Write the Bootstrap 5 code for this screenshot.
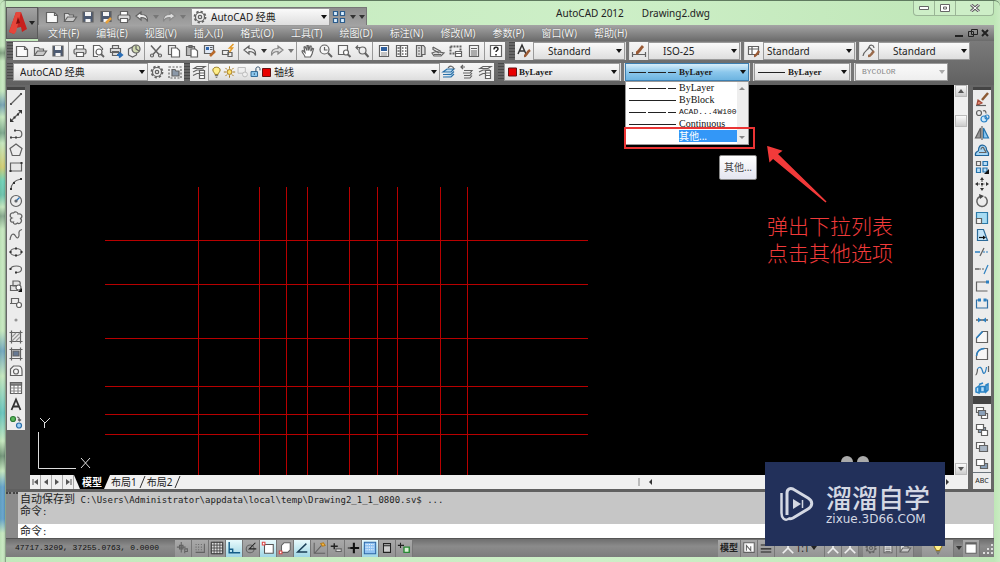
<!DOCTYPE html>
<html lang="zh-CN">
<head>
<meta charset="utf-8">
<meta name="viewport" content="width=device-width, initial-scale=1">
<title>AutoCAD 2012 - Drawing2.dwg</title>
<link href="https://cdn.jsdelivr.net/npm/bootstrap@5.3.0/dist/css/bootstrap.min.css" rel="stylesheet">
<style>
:root{--ui:"Noto Sans","Noto Sans CJK SC",sans-serif;--chrome:#676767;--strip:#ececec}
body{font-family:var(--ui);font-size:10px;line-height:16px;color:#222;background:#bfe0b8}
button,select,input{font-family:inherit;font-size:inherit;line-height:inherit;color:inherit}
svg{display:block;flex:none}
.ic{width:16px;height:16px;fill:none;stroke:#626262;stroke-width:1.2;overflow:hidden}
.win{height:100vh;padding:0 6px 5px;border:1px solid #5f7a5f;border-width:1px 0 0;border-radius:6px 6px 0 0;
 background:linear-gradient(90deg,#b3d8ac 0,#d0ebca 3px,#7d947c 6px,#c3e9bc 6px,#cdefc7 60%,#bfe6b7 994px,#c9ecc2)}
.edge-l{position:absolute;left:0;top:0;bottom:0;width:5px;opacity:.55;background:linear-gradient(#c5e8be 45px,#4d6b52 52px,#c5e8be 60px,#c5e8be 90px,#3a6ea8 104px,#c5e8be 116px,#476 132px,#c5e8be 142px,#d9b83a 166px,#2fc0b0 180px,#2ba79d 194px,#c5e8be 206px,#576 215px,#c5e8be 228px,#c5e8be 330px,#37b 350px,#c5e8be 375px,#2ab 412px,#c5e8be 440px,#354 455px,#c5e8be 470px,#1b6fd0 486px,#1b6fd0 518px,#c5e8be 532px)}
.appbtn{width:32px;height:32px;margin-top:6px;background:linear-gradient(#a3a3a3,#8a8a8a 50%,#6f6f6f);border:1px solid #5a5a5a}
.titlerow{height:24px}
.qat{height:18px;margin-top:6px;background:linear-gradient(#8d8d8d,#a2a2a2);border:1px solid #777;border-bottom:0}
.tl{width:18px;height:18px;padding:0;border:0;background:none;display:flex;align-items:center;justify-content:center;flex:none}
.crt{width:9px;height:18px;padding:0;border:0;background:none;flex:none;display:flex;align-items:center;justify-content:center}
.crt::before{content:"";border:3px solid transparent;border-top:4px solid #333;border-bottom:0}
.crt.dim::before{border-top-color:#777}
.menus{height:16px;background:linear-gradient(#a5a5a5,#6b6b6b);padding-left:10px;padding-right:4px}
.menus a{color:#f5f5f5;text-decoration:none;white-space:nowrap;text-shadow:0 0 1px #444}
.menus ul{gap:17px}
.wctl{height:15px;border:1px solid #9ab596;border-top:0;border-radius:0 0 4px 4px;background:#cdeec7}
.wctl button{height:14px;padding:0;border:0;border-right:1px solid #9ab596;background:none;width:21px;display:flex;align-items:center;justify-content:center}
.wctl button:last-child{border-right:0;width:37px}
.bars{background:linear-gradient(#7a7a7a,#616161);padding:1px 1px 4px}
.barrow{height:18px}
.barrow+.barrow{margin-top:3px}
.grip{width:6px;height:18px;background:repeating-linear-gradient(#4a4a4a 0 1px,#666 1px 3px);flex:none}
.grip-s{width:5px;height:18px;flex:none;border-left:1px solid #ddd;border-right:1px solid #ddd;background:#777}
.strip{background:linear-gradient(#f6f6f6,#e4e4e4)}
.sepv{width:4px;height:18px;flex:none;background:linear-gradient(90deg,transparent 1px,#999 1px 2px,transparent 2px)}
.cmb{position:relative;height:18px;flex:none}
.cmb .form-select{height:18px;min-height:0;padding:0 12px 0 6px;font-size:10px;line-height:16px;border:1px solid #9a9a9a;border-radius:0;color:#222;
 background-color:#eee;background-image:url("data:image/svg+xml,%3Csvg xmlns='http://www.w3.org/2000/svg' viewBox='0 0 8 6'%3E%3Cpath d='M1 1h6L4 5z' fill='%23111'/%3E%3C/svg%3E"),linear-gradient(#fafafa,#dedede);background-size:8px 6px,100% 100%;background-position:right 1px center,0 0;background-repeat:no-repeat}
.cmb .form-select.hot{background-color:#9dd0ee;background-image:url("data:image/svg+xml,%3Csvg xmlns='http://www.w3.org/2000/svg' viewBox='0 0 8 6'%3E%3Cpath d='M1 1h6L4 5z' fill='%23111'/%3E%3C/svg%3E"),linear-gradient(#d8eefa,#8cc8ec 50%,#6db4e0);border-color:#3c7fb1}
.cmb .form-select:disabled{color:#888;background-color:#f2f2f2;background-image:url("data:image/svg+xml,%3Csvg xmlns='http://www.w3.org/2000/svg' viewBox='0 0 8 6'%3E%3Cpath d='M1 1h6L4 5z' fill='%23aaa'/%3E%3C/svg%3E"),linear-gradient(#fafafa,#eee)}
.cmb .deco{position:absolute;left:4px;top:1px;pointer-events:none}
.ser{font-family:"Liberation Serif",serif;font-weight:700}
.cmb .form-select.ser{font-size:9px}
.mono8{font-family:"Liberation Mono",monospace;font-size:8px}
.cmb .form-select.mono8{font-size:8px}
.pl-swatch{padding-left:14px!important}.pl-line{padding-left:53px!important}.pl-wide{padding-left:14px!important}.pl-short{padding-left:33px!important}.pl-gear{padding-left:19px!important}.pl-layer{padding-left:65px!important}
.ltlist{position:absolute;z-index:20;left:0;top:18px;width:124px;height:64px;background:#fff;border:1px solid #999;overflow:hidden}
.ltlist ul{width:111px;overflow:hidden;flex:none}
.ltlist li{height:12px;line-height:12px;font-weight:400;color:#111;font-size:10px;padding-left:3px;white-space:nowrap}
.ltlist li svg{width:50px;height:12px}
.ltlist li.mono8{font-size:8px}
.ltlist .sel{background:#3397f7;color:#fff;font-family:var(--ui);flex:1}
.ltlist .vs{background:#eee;width:11px}
.hl{position:absolute;z-index:21;left:-1px;top:64px;width:131px;height:22px;border:2px solid #ea3434;pointer-events:none}
.tip{position:absolute;z-index:20;left:94px;top:92px;height:25px;padding:3px 4px;border:1px solid #888;border-radius:2px;background:linear-gradient(#fff,#e4e5f0);color:#444;white-space:nowrap}
.work{background:var(--chrome);min-height:0;padding-left:1px}
.side{width:18px;margin-top:2px;flex:none;overflow:hidden}
.side .tl{height:17px;background:var(--strip)}
.side .vgrip{height:3px;flex:none;background:#444}
.canvas{background:#000;overflow:hidden;min-width:0;min-height:0;position:relative}
.note{position:absolute;left:737px;top:127px;font-size:21px;line-height:27px;font-weight:300;color:#f03a3a;font-family:"Noto Sans CJK SC",sans-serif;white-space:nowrap}
.vscroll{width:14px;background:#f0f0f0;flex:none}
.sb{width:12px;height:12px;padding:0;border:1px solid #bbb;background:linear-gradient(#fafafa,#ccc);display:flex;align-items:center;justify-content:center;flex:none}
.tabs{height:14px;background:#f0f0f0;line-height:14px}
.tabs button{border:0;padding:0;background:#f0f0f0;width:11px;height:14px;display:flex;align-items:center;justify-content:center;border-right:1px solid #aaa}
.tabs a{text-decoration:none;color:#222}
.tabs .on{background:#000;color:#fff;font-weight:700}
.cmd{border-top:3px solid #606060;background:#c6c6c6;height:49px;font-family:"DejaVu Sans Mono","Noto Sans CJK SC",monospace;font-size:9px;line-height:12px}
.cmd .handle{width:12px;background:#8b8b8b;border-top:2px dotted #444;flex:none}
.cmd .zh{font-size:11px}
.cmd .hist{padding:2px 0 0 2px}
.cmd input{border:0;padding:0;background:#fff;width:100%;height:14px;line-height:14px;outline:0}
.cmdline{background:#fff;height:14px;line-height:15px;padding-left:2px}
.status{height:19px;background:linear-gradient(#6e6e6e,#8b8b8b 40%,#7c7c7c);border-top:1px solid #555}
.status .tl{width:17px;height:17px;background:linear-gradient(#a9a9a9,#939393);border-right:1px solid #777}
.status .tl.lit{background:linear-gradient(#e8fafc,#9fd6e4)}
.status .ic{width:14px;height:14px}
.coord{width:160px;flex:none;font-family:"Liberation Mono",monospace;font-size:8px;color:#111;white-space:nowrap}
.brand{position:absolute;z-index:30;right:55px;bottom:16px;width:180px;height:84px;background:#22305a;color:#d4d8e3;padding-left:14px}
.brand .bn{font-family:"Noto Sans CJK SC",sans-serif;font-size:26px;line-height:30px;font-weight:500}
.brand .bu{font-family:"DejaVu Sans",sans-serif;font-size:12px;line-height:14px}
</style>
</head>
<body class="overflow-hidden">
<svg width="0" height="0" class="position-absolute" aria-hidden="true"><defs>
<symbol id="new" viewBox="0 0 16 16"><path d="M2.500 3.500h8l3 3v7h-11z" fill="#fafafa"/><path d="M10.500 3.500v3h3"/></symbol>
<symbol id="open" viewBox="0 0 16 16"><path d="M2.500 12.500v-8h4l1 1.500h4v2" fill="#ddd"/><path d="M2.500 12.500l3-4.500h9l-3 4.500z" fill="#c9c9c9"/></symbol>
<symbol id="save" viewBox="0 0 16 16"><path d="M3 3h10v10H3z" fill="#4c5a72"/><path d="M5 3h6v4H5zM5.500 10h5v3h-5z" fill="#f4f4f4" stroke="none"/></symbol>
<symbol id="saveas" viewBox="0 0 16 16"><path d="M3 2.500h10v10H3z" fill="#4c5a72"/><path d="M5 3h6v4H5zM5.500 10h5v3h-5z" fill="#f4f4f4" stroke="none"/><path d="M8 14l5-5" stroke="#e5a03c" stroke-width="2.500"/></symbol>
<symbol id="print" viewBox="0 0 16 16"><path d="M4.500 6V2.500h7V6" fill="#fff"/><rect x="2" y="6" width="12" height="5" rx="1.500" fill="#d8d8d8"/><path d="M4.500 9.500h7v4h-7z" fill="#fff"/></symbol>
<symbol id="preview" viewBox="0 0 16 16"><path d="M8 13.500H3.500v-11h6l3 3V7" fill="#fff"/><circle cx="9" cy="9" r="3"/><path d="M11 11l3 3" stroke-width="1.800"/></symbol>
<symbol id="plot" viewBox="0 0 16 16"><path d="M4.500 5V2.500h6V5M2.500 5.500h10v4h-10zM4.500 8.500h6v4h-6z" fill="#ddd"/><path d="M9 12h4m-2-2.500l3 2.500-3 2.500" stroke="#2a6db5" stroke-width="2"/></symbol>
<symbol id="publish" viewBox="0 0 16 16"><path d="M2.500 6l4-2 4 2v6l-4 2-4-2z" fill="#eee"/><circle cx="10" cy="6" r="4" fill="#cfd9b0"/><path d="M10 2.500v3.500l3 2"/></symbol>
<symbol id="cut" viewBox="0 0 16 16"><path d="M3 2.500l8 9M13 2.500l-8 9" stroke-width="1.500"/><circle cx="4" cy="12.500" r="1.500"/><circle cx="12" cy="12.500" r="1.500"/></symbol>
<symbol id="copyc" viewBox="0 0 16 16"><path d="M2.500 2.500h7v9h-7z" fill="#eee"/><path d="M5.500 5h5.500l2.500 2.500v6.500h-8z" fill="#fff"/></symbol>
<symbol id="paste" viewBox="0 0 16 16"><path d="M2.500 3.500h8v9h-8z" fill="#bbb"/><path d="M5 2.500h3v2H5z" fill="#777"/><path d="M7 6h4.500l2 2v6H7z" fill="#fff"/></symbol>
<symbol id="match" viewBox="0 0 16 16"><path d="M2.500 2.500h9v8h-9z" fill="#dfe8f5"/><path d="M4 4h3v3H4z" fill="#2e67b0" stroke="none"/><path d="M8 4.500h2.500M8 6.500h2.500"/><path d="M8 13l5-5" stroke="#b96b2c" stroke-width="2.500"/></symbol>
<symbol id="bedit" viewBox="0 0 16 16"><path d="M2.500 7.500h6v4h-6zM8 9.500h4v4H8z" fill="#eee"/><path d="M13.500 1l-4 4h3l-3 4" stroke="#e39a27" stroke-width="1.500"/></symbol>
<symbol id="undo" viewBox="0 0 16 16"><path d="M2 7l5-4v2.500c5 0 7 2 6.500 7-1-3-3-4-6.500-4V11z" fill="#eee"/></symbol>
<symbol id="redo" viewBox="0 0 16 16"><path d="M14 7L9 3v2.500c-5 0-7 2-6.500 7 1-3 3-4 6.500-4V11z" fill="#ddd" stroke="#888"/></symbol>
<symbol id="pan" viewBox="0 0 16 16"><path d="M5 14c0-2-3-4-3-6l1-.5L5 9.500 4 4l1-.5L7 7.500V2.500h1.200l.5 5L10 3l1.200.3-.4 5 1.700-3 1 .5L12 11l-1.500 3z" fill="#fff"/></symbol>
<symbol id="zoomr" viewBox="0 0 16 16"><circle cx="6.500" cy="6.500" r="4.500" fill="#f6f6f6"/><path d="M10 10l4 4" stroke-width="2"/><path d="M6.500 4v3h3"/></symbol>
<symbol id="zoomw" viewBox="0 0 16 16"><path d="M2.500 2.500h9v9h-9z" fill="#f6f6f6"/><circle cx="10" cy="9.500" r="2.500" fill="#fff"/><path d="M12 11.500l2.500 2.500" stroke-width="2"/></symbol>
<symbol id="zoomp" viewBox="0 0 16 16"><path d="M6 4.500H2m2-2l-2 2 2 2"/><circle cx="8.500" cy="7.500" r="3.500"/><path d="M11 10l3.500 4" stroke-width="2"/></symbol>
<symbol id="props" viewBox="0 0 16 16"><path d="M3.500 2.500h9v11h-9z" fill="#fff"/><path d="M5 4h6v4H5z" fill="#2e5f9e" stroke="none"/><path d="M5 10h6M5 12h6" stroke="#888"/></symbol>
<symbol id="dc" viewBox="0 0 16 16"><path d="M2.500 2.500h11v11h-11z" fill="#fff"/><path d="M6.500 2.500v11M8 5h1.500M11 5h1.500M8 8h1.500M11 8h1.500M8 11h1.500M11 11h1.500M3.500 5h2M3.500 8h2M3.500 11h2" stroke-width="1.500"/></symbol>
<symbol id="pal" viewBox="0 0 16 16"><path d="M4.500 2.500h7l1.500 2v7H10v2H4.500z" fill="#ddd"/><path d="M9.500 2.500v11M6 5h2M6 8h2M6 11h2"/></symbol>
<symbol id="sheet" viewBox="0 0 16 16"><path d="M2 10l4-1.500 8 1.500-3 3H4z" fill="#ddd"/><path d="M3 4l8 4.500M3 4v2.500l6 3.500M4 11.500h7"/></symbol>
<symbol id="mark-up" viewBox="0 0 16 16"><path d="M2.500 3.500h10v4M2.500 3.500v7H7" stroke-dasharray="2 1" stroke-width="2"/><path d="M7.500 8.500h6v5h-6zM7.500 10.500h6" fill="#fff"/></symbol>
<symbol id="calc" viewBox="0 0 16 16"><path d="M3.500 2.500h9v11h-9z" fill="#f4f4f4"/><path d="M5 5.500h6M5 8h6M5 10h6M5 12h6" stroke-width="1"/></symbol>
<symbol id="help" viewBox="0 0 16 16"><path d="M2.500 2.500h11v11h-11z" fill="#fff"/><path d="M6 6.500c0-3 4-3 4-.5 0 1.500-2 1.500-2 3M8 11v1.500" stroke="#222" stroke-width="1.500"/></symbol>
<symbol id="gear" viewBox="0 0 16 16"><circle cx="8" cy="8" r="5.500" stroke-width="1.800" stroke-dasharray="2.300 2"/><circle cx="8" cy="8" r="4.500"/><circle cx="8" cy="8" r="1.700"/></symbol>
<symbol id="wssave" viewBox="0 0 16 16"><path d="M2 3h12v11H2z" stroke-dasharray="2 1.500"/><path d="M5 5.500h3l1 1.500h3v5H5z" fill="#8b98a8"/></symbol>
<symbol id="grid4" viewBox="0 0 16 16"><path d="M2.500 2.500h4v4h-4zM9.500 2.500h4v4h-4zM2.500 9.500h4v4h-4zM9.500 9.500h4v4h-4z" fill="#d9efff" stroke="#2c5d8d"/></symbol>
<symbol id="layers" viewBox="0 0 16 16"><path d="M3 4.500l3-2h8l-3 2zM2 8l4-2h7M2 11.500l4-2h2"/><path d="M8.500 6.500h5v8h-5zM8.500 9h5M8.500 11.500h5" fill="#fff"/></symbol>
<symbol id="laycur" viewBox="0 0 16 16"><path d="M2 8l4-3h7l-3 3zM2 10.500h8l3-3M2 13h8l3-3" stroke="#2a70a8" fill="#bddcf0"/><path d="M7 4c2-3 5-2 6 1"/></symbol>
<symbol id="layprev" viewBox="0 0 16 16"><path d="M5 6.500h8l-2 2.500H4M5 11.500h6l2-2.500M5 14h6l2-2.500M2 3h4M4 1L2 3l2 2"/></symbol>
<symbol id="bulb" viewBox="0 0 16 16"><path d="M6 11c0-2-2.500-3-2.500-5.500C3.500 1 12.500 1 12.500 5.500 12.500 8 10 9 10 11z" fill="#ffef8a" stroke="#997b1f"/><path d="M6 12.500h4M7 14.500h2"/></symbol>
<symbol id="sun" viewBox="0 0 16 16"><circle cx="8" cy="8" r="3" fill="#ffe36a" stroke="#a7791d"/><path d="M8 1v3M8 12v3M1 8h3M12 8h3M3 3l2 2M11 11l2 2M13 3l-2 2M5 11l-2 2" stroke="#a7791d"/></symbol>
<symbol id="vpf" viewBox="0 0 16 16"><path d="M2.500 2.500h9v7h-9z" stroke="#bbb"/><circle cx="11" cy="11" r="3" stroke="#bbb" fill="#eee"/></symbol>
<symbol id="lock" viewBox="0 0 16 16"><path d="M2.500 7.500h8v6h-8z" fill="#8fcaf0" stroke="#2c6794"/><path d="M8.500 7.500V4c0-3 5-3 5 0v2M6.500 9.500v2" stroke="#2c4a66"/></symbol>
<symbol id="txt" viewBox="0 0 16 16"><path d="M2 11L6 2l4 9M3.500 8h5" stroke="#333" stroke-width="1.500"/><path d="M8 13c3 0 2-3 6-6" stroke="#9a5a35" stroke-width="2.500"/></symbol>
<symbol id="dimst" viewBox="0 0 16 16"><path d="M1.500 9v5M14.500 9v5M2 11.500h12"/><path d="M5 10c3 0 3-3 7-7" stroke="#9a5a35" stroke-width="3"/></symbol>
<symbol id="tabst" viewBox="0 0 16 16"><path d="M2.500 3.500h10v8h-10zM2.500 6h10M6 3.500v8" fill="#fff"/><path d="M8 13c2 0 3-2 5-5" stroke="#9a5a35" stroke-width="2.500"/></symbol>
<symbol id="mlst" viewBox="0 0 16 16"><path d="M2 13C3 7 7 8 8 4c1-3 5-2 5 1M8 4l4 4"/><path d="M7 13c3 0 3-2 6-5" stroke="#9a6b4c" stroke-width="2.500"/></symbol>
<symbol id="line" viewBox="0 0 16 16"><path d="M3 13L13 3"/><path d="M2 12h2v2H2zM12 2h2v2h-2z" fill="#555" stroke="none"/></symbol>
<symbol id="xline" viewBox="0 0 16 16"><path d="M3 13L13 3"/><path d="M2 10v4h4zM14 6V2h-4zM5.500 8.500h2v2h-2zM9 5.500h2v2H9z" fill="#333" stroke="none"/></symbol>
<symbol id="pline" viewBox="0 0 16 16"><path d="M3 12.500h8c4 0 3.500-7 0-7H8"/><path d="M2 11.500h2v2H2zM7 11.500h2v2H7zM6 4.500h2v2H6z" fill="#444" stroke="none"/></symbol>
<symbol id="poly" viewBox="0 0 16 16"><path d="M8 2l6 4.500-2.300 7H4.300L2 6.500z"/></symbol>
<symbol id="rect" viewBox="0 0 16 16"><path d="M2.500 4h11v8h-11z" fill="#e8e8e8"/><path d="M1.500 11h2v2h-2zM12.500 3h2v2h-2z" fill="#333" stroke="none"/></symbol>
<symbol id="arc" viewBox="0 0 16 16"><path d="M3 14c0-6 4-10 10-11"/><path d="M2 12h2v2H2zM5 6h2v2H5zM12 2h2v2h-2z" fill="#333" stroke="none"/></symbol>
<symbol id="circ" viewBox="0 0 16 16"><circle cx="8" cy="8" r="5.500"/><path d="M8 8l3.500-3.500" stroke="#2b73b8"/><circle cx="8" cy="8" r="1" fill="#2b73b8"/></symbol>
<symbol id="cloud" viewBox="0 0 16 16"><path d="M4 8C1 7 2 2 5.500 3 7 1 10 2 10 4c4-1 5 3 2.500 4.500C15 11 12 15 9.500 13 7 15 5 14 5.500 12 2 13 1.500 9 4 8z"/></symbol>
<symbol id="spline" viewBox="0 0 16 16"><path d="M2 13c1-7 4-7 5.500-4 2 4 4 1 3.500-2S12 3 14 2.500"/></symbol>
<symbol id="ell" viewBox="0 0 16 16"><ellipse cx="8" cy="8" rx="5.500" ry="3.500"/><path d="M1.500 7h2v2h-2zM12.500 7h2v2h-2zM7 3.500h2v2H7zM7 10.500h2v2H7z" fill="#333" stroke="none"/></symbol>
<symbol id="ella" viewBox="0 0 16 16"><path d="M2.500 8c1-4 11-4 11 0 0 2-2 3.500-5 3.500"/><path d="M1.500 7h2v2h-2zM7 10.500h2v2H7z" fill="#333" stroke="none"/></symbol>
<symbol id="insb" viewBox="0 0 16 16"><path d="M5 8V3h5c3 0 3 5 0 5zM2.500 7.500h7v5h-7z" fill="#e3e3e3"/><circle cx="10.500" cy="9.500" r="2.500" fill="#fff"/><path d="M14 10v4h-4z" fill="#111" stroke="none"/></symbol>
<symbol id="mkb" viewBox="0 0 16 16"><path d="M3.500 3.500h7v5h-7zM2 8.500h8" fill="#eee"/><circle cx="11" cy="10" r="2.500" fill="#fff"/></symbol>
<symbol id="pt" viewBox="0 0 16 16"><circle cx="8" cy="8" r="1" fill="#444" stroke="#999"/></symbol>
<symbol id="hatch" viewBox="0 0 16 16"><path d="M3.500 1.500v13M12.500 1.500v13M1.500 3.500h13M1.500 12.500h13"/><path d="M4 8l4-4M4 12l8-8M8 12l4-4" stroke="#999"/></symbol>
<symbol id="grad" viewBox="0 0 16 16"><path d="M3.500 1.500v13M12.500 1.500v13M1.500 3.500h13M1.500 12.500h13"/><path d="M5 5h6v5H5z" fill="#667892"/></symbol>
<symbol id="region" viewBox="0 0 16 16"><path d="M2.500 12.500V6l3-3h5c3 0 3.500 3 3.500 5v4.500z" fill="#f4f4f4"/><circle cx="8" cy="8.500" r="2.500"/></symbol>
<symbol id="table" viewBox="0 0 16 16"><path d="M2.500 2.500h11v11h-11z" fill="#fff"/><path d="M2.500 5h11M2.500 8h11M2.500 11h11M6 5v8.500M10 5v8.500" stroke="#888"/><path d="M2.500 2.500h11V5h-11z" fill="#888"/></symbol>
<symbol id="mt" viewBox="0 0 16 16"><path d="M3.500 13L8 2.500 12.500 13M5 9.500h6" stroke="#333" stroke-width="1.800"/></symbol>
<symbol id="adds" viewBox="0 0 16 16"><circle cx="5" cy="5" r="2.500" fill="#5cb85c" stroke="#2c7a35"/><circle cx="11" cy="11.500" r="2.500" fill="#9fd0f5" stroke="#2a6da8"/><path d="M9 3c2 0 2.500 1 2.500 3.500M10 5.500l1.500 1.500L13 5.500"/></symbol>
<symbol id="erase" viewBox="0 0 16 16"><path d="M8 9l6-7" stroke="#8d5a33" stroke-width="2.500"/><path d="M4 9l4 3-3 1.500H3z" fill="#e48a71" stroke="#a54d3c"/><path d="M2 14.500h10"/></symbol>
<symbol id="copyo" viewBox="0 0 16 16"><circle cx="5" cy="5" r="2.500"/><circle cx="10" cy="11" r="3" stroke="#2b83c6" fill="#cde8fa"/><circle cx="13" cy="9" r="2" stroke="#2b83c6"/><path d="M9 3c2-1 3 0 3 2.500"/></symbol>
<symbol id="mirror" viewBox="0 0 16 16"><path d="M6.500 3v10h-5z" fill="#9a9a9a"/><path d="M9.500 3v10h5z" fill="#8cc8f2" stroke="#2372ac"/><path d="M8 1v14"/></symbol>
<symbol id="offset" viewBox="0 0 16 16"><path d="M1.500 13.500c-1-4 3-4 3-5 0-8 8-6 8-1 0 2 2.500 1 2 6z" fill="#a4d5f5" stroke="#20649a"/><path d="M5 10.500h7c0-2-2-2-2-4-1-2-3-1-3 1"/></symbol>
<symbol id="array" viewBox="0 0 16 16"><path d="M2.500 2.500h4v4h-4z"/><path d="M9 2.500h4.500v4H9zM2.500 9h4v4.500h-4zM9 9h4v4H9z" fill="#b9def7" stroke="#2372ac"/><path d="M15 10v5h-5z" fill="#111" stroke="none"/></symbol>
<symbol id="move" viewBox="0 0 16 16"><path d="M8 3v10M3 8h10" stroke-dasharray="3 1.500"/><path d="M8 1l2 3H6zM8 15l2-3H6zM1 8l3-2v4zM15 8l-3-2v4zM7 7h2v2H7z" fill="#333" stroke="none"/></symbol>
<symbol id="rot" viewBox="0 0 16 16"><path d="M6 3.500a5.200 5.200 0 1 0 4.500.2" stroke-width="1.500"/><path d="M5 1l5 2-4 3z" fill="#444" stroke="none"/></symbol>
<symbol id="scale" viewBox="0 0 16 16"><path d="M2.500 2.500h11v11h-11z" fill="#a6dbf3" stroke="#2c7aa8"/><path d="M2.500 8.500h5v5h-5z" fill="#f4f4f4"/></symbol>
<symbol id="stretch" viewBox="0 0 16 16"><path d="M3.500 2.500h6l4 11h-10z" fill="#c4e4f8" stroke="#2c6a98"/><path d="M5 10.500h4" stroke="#111"/><path d="M9 8.500l3 2-3 2z" fill="#111" stroke="none"/></symbol>
<symbol id="trim" viewBox="0 0 16 16"><path d="M6 12l4-8"/><path d="M1 8h5" stroke="#2b7fc0" stroke-width="1.500"/><path d="M9 8h6" stroke-dasharray="2 1" stroke="#2b7fc0"/></symbol>
<symbol id="extend" viewBox="0 0 16 16"><path d="M10 13l4-9" stroke="#2b7fc0"/><path d="M1 8h4" stroke-width="1.500"/><path d="M5 8h6" stroke-dasharray="2 1"/></symbol>
<symbol id="bpt" viewBox="0 0 16 16"><path d="M13.500 4h-11v9h11"/><path d="M12 2.500h3v3h-3z" fill="#2b7fc0" stroke="none"/></symbol>
<symbol id="brk" viewBox="0 0 16 16"><path d="M5 5H2.500v8h11V5H11" stroke="#2f6ea4"/><path d="M4 3.500h3v3H4zM9.500 3.500h3v3h-3z" fill="#2b7fc0" stroke="none"/></symbol>
<symbol id="join" viewBox="0 0 16 16"><path d="M2 8h12" stroke-width="1.500"/><path d="M4 5.500L7.500 8 4 10.500zM12 5.500L8.500 8l3.500 2.500z" fill="#2b7fc0" stroke="none"/></symbol>
<symbol id="chamf" viewBox="0 0 16 16"><path d="M2.500 13.500V9l6-6.500h5v11z" fill="#f7f7f7"/><path d="M2.500 9l6-6.500" stroke="#2b7fc0" stroke-width="1.600"/></symbol>
<symbol id="fillet" viewBox="0 0 16 16"><path d="M2.500 13.500V10c0-5 4-7.500 8-7.500h3v11z" fill="#f7f7f7"/><path d="M2.500 10c0-5 4-7.500 8-7.500" stroke="#2b7fc0" stroke-width="1.600"/></symbol>
<symbol id="blend" viewBox="0 0 16 16"><path d="M1.500 12c1 0 2-3 2-6M14.500 3v6"/><path d="M3.500 6c2-3 4-2 5 2s3 3 4-4" stroke="#2b7fc0"/></symbol>
<symbol id="expl" viewBox="0 0 16 16"><path d="M2 8l3-2v7l-3-1zM6.500 6.500h4V12h-4zM12 5l2-1v6l-2 2zM5 4.500l4-1.500" fill="#b7defa" stroke="#2a83c4" stroke-width="1.500"/></symbol>
<symbol id="ord1" viewBox="0 0 16 16"><path d="M2.500 2.500h7v5h-7zM7.500 8.500h6v5h-6z" fill="#fff"/><path d="M4.500 5.500h7v5h-7z" fill="#8aa0b8"/></symbol>
<symbol id="ord2" viewBox="0 0 16 16"><path d="M4.500 5.500h7v5h-7z" fill="#8aa0b8"/><path d="M2.500 2.500h7v5h-7zM7.500 8.500h6v5h-6z" fill="#fff"/></symbol>
<symbol id="ord3" viewBox="0 0 16 16"><path d="M2.500 3.500h8v6h-8z" fill="#fff"/><path d="M5.500 6.500h8v6h-8z" fill="#a9b6c4"/></symbol>
<symbol id="ord4" viewBox="0 0 16 16"><path d="M6.500 7.500h7v5h-7z" fill="#8aa0b8"/><path d="M2.500 3.500h8v6h-8z" fill="#fff"/></symbol>
<symbol id="s1" viewBox="0 0 16 16"><path d="M6 1v12M1 7h10M4 5h4v4H4z"/><path d="M10 14v-5h3v3h-3"/></symbol>
<symbol id="s2" viewBox="0 0 16 16"><path d="M3 4h8M3 7h8M3 10h8" stroke-dasharray="1 2"/><path d="M13 3v10H3"/></symbol>
<symbol id="s3" viewBox="0 0 16 16"><path d="M1.500 1.500h13v13h-13z" fill="#ddd"/><path d="M1.500 1.500h13v13h-13zM4.700 1v14M8 1v14M11.300 1v14M1 4.700h14M1 8h14M1 11.300h14" stroke="#444" stroke-width="1"/></symbol>
<symbol id="s4" viewBox="0 0 16 16"><path d="M2.500 1v12.500H15M2.500 9.500h4v4" stroke="#155d88" stroke-width="1.600"/></symbol>
<symbol id="s5" viewBox="0 0 16 16"><circle cx="7" cy="9" r="4.500"/><path d="M13 2L6 9h8" stroke="#222"/></symbol>
<symbol id="s6" viewBox="0 0 16 16"><path d="M4 4h10v10H4z" fill="#fff" stroke="#555"/><path d="M1.500 1.500h3v3h-3z" fill="#fff" stroke="#d44"/></symbol>
<symbol id="s7" viewBox="0 0 16 16"><path d="M4 5l3-3h7v8l-3 3H4z" fill="#fff"/><path d="M1.500 11.500h3v3h-3z" fill="#fff" stroke="#d44"/></symbol>
<symbol id="s8" viewBox="0 0 16 16"><path d="M13 3L3 12.500h11" stroke="#1a3e57" stroke-width="1.600"/></symbol>
<symbol id="s9" viewBox="0 0 16 16"><path d="M2.500 2v12H15M3 14l8-9"/><path d="M10 3l2 3 3-1-2-3z" fill="#f5b944" stroke="#b57a1a"/></symbol>
<symbol id="s10" viewBox="0 0 16 16"><path d="M2 6h8M6 2.500v7" stroke="#222" stroke-width="1.600"/><path d="M8 9h6v3H8z" fill="#ddd"/></symbol>
<symbol id="s11" viewBox="0 0 16 16"><path d="M2 8h7" stroke="#222"/><path d="M9 2v12M5 8h10" stroke="#111" stroke-width="2.400"/></symbol>
<symbol id="s12" viewBox="0 0 16 16"><path d="M1.500 1.500h13v13h-13z" fill="#8ec2f2" stroke="#2b66a5"/><path d="M3 4h10M3 7h10M3 10h10" stroke="#fff" stroke-dasharray="1 1"/></symbol>
<symbol id="s13" viewBox="0 0 16 16"><path d="M4 3h8v10H4zM4 5.500h8" stroke="#222" fill="#ccc"/></symbol>
<symbol id="s14" viewBox="0 0 16 16"><path d="M1 5h7M4 2v6" stroke="#222"/><path d="M8 7h6v6H8z" fill="#d8f0d4" stroke="#2a8a36" stroke-width="1.600"/></symbol>
<symbol id="sl" viewBox="0 0 16 16"><path d="M2 2h12v11H2z" fill="#fff"/><path d="M5 11V5l5 6V6"/></symbol>
<symbol id="sm" viewBox="0 0 16 16"><path d="M2 4.500h12M2 9h12M2 12.500h12" stroke="#222"/></symbol>
<symbol id="scl" viewBox="0 0 16 16"><path d="M8 3v5L2 14M8 8l6 6" stroke="#eee" stroke-width="2"/></symbol>
<symbol id="clean" viewBox="0 0 16 16"><path d="M2 2h12v12H2z" fill="#fff"/><path d="M2 3h12" stroke-width="2"/></symbol>
</defs></svg>

<div class="win d-flex flex-column position-relative">
<div class="edge-l"></div>
<header class="d-flex">
 <button class="appbtn d-flex align-items-center justify-content-center p-0" aria-label="应用程序菜单"><svg width="20" height="26" viewBox="0 0 20 26"><path d="M1 22L8 2h5l6 17-5 3-1-5-5 1-2 6z" fill="#c7201d"/><path d="M8 2h5l-5 20-2 2-5-2z" fill="#e5463b"/><path d="M8 14l2-7 2 6z" fill="#7d0d0d"/></svg><svg width="8" height="6" viewBox="0 0 8 6"><path d="M1 1h6L4 5z" fill="#222"/></svg></button>
 <div class="flex-grow-1">
  <div class="titlerow d-flex align-items-start">
   <div class="qat d-flex align-items-center ps-1">
    <button class="tl" aria-label="新建"><svg class="ic"><use href="#new"/></svg></button><button class="tl" aria-label="打开"><svg class="ic"><use href="#open"/></svg></button><button class="tl" aria-label="保存"><svg class="ic"><use href="#save"/></svg></button><button class="tl" aria-label="另存为"><svg class="ic"><use href="#saveas"/></svg></button><button class="tl" aria-label="打印"><svg class="ic"><use href="#print"/></svg></button><button class="tl" aria-label="放弃"><svg class="ic"><use href="#undo"/></svg></button><button class="crt dim" aria-label="放弃列表"></button><button class="tl" aria-label="重做"><svg class="ic"><use href="#redo"/></svg></button><button class="crt dim" aria-label="重做列表"></button>
    <div class="cmb ms-1" style="width:139px"><svg class="ic deco" style="left:1px"><use href="#gear"/></svg><select class="form-select pl-gear" aria-label="工作空间"><option>AutoCAD 经典</option></select></div>
    <button class="tl" aria-label="视口"><svg class="ic"><use href="#grid4"/></svg></button><button class="crt" aria-label="视口列表"></button><button class="crt" aria-label="自定义"></button>
   </div>
   <div class="d-flex align-self-center ms-auto" style="gap:18px;padding-right:203px"><span>AutoCAD 2012</span><span>Drawing2.dwg</span></div>
   <div class="wctl d-flex"><button aria-label="最小化"><svg width="10" height="6"><path d="M.5 1.500h9v3h-9z" fill="#fff" stroke="#666"/></svg></button><button aria-label="最大化"><svg width="10" height="8"><path d="M.5.5h9v7h-9zM3.500 3h3v2h-3z" fill="#fff" stroke="#666"/></svg></button><button aria-label="关闭"><svg width="10" height="8" viewBox="0 0 10 8"><path d="M1 .5l8 7M9 .5l-8 7" stroke="#666" stroke-width="3"/><path d="M1 .5l8 7M9 .5l-8 7" stroke="#fff"/></svg></button></div>
  </div>
  <nav class="menus d-flex align-items-center"><ul class="list-unstyled d-flex mb-0"><li><a href="#">文件(F)</a></li><li><a href="#">编辑(E)</a></li><li><a href="#">视图(V)</a></li><li><a href="#">插入(I)</a></li><li><a href="#">格式(O)</a></li><li><a href="#">工具(T)</a></li><li><a href="#">绘图(D)</a></li><li><a href="#">标注(N)</a></li><li><a href="#">修改(M)</a></li><li><a href="#">参数(P)</a></li><li><a href="#">窗口(W)</a></li><li><a href="#">帮助(H)</a></li></ul>
   <svg class="ms-auto" width="36" height="10" viewBox="0 0 36 10" fill="none" stroke="#222"><path d="M1 8h8M28 2l6 6M34 2l-6 6" stroke-width="2"/><path d="M17.500 1.500h6v5h-6zM14.500 3.500h5v5h-5z"/></svg></nav>
 </div>
</header>

<div class="bars">
 <div class="barrow d-flex">
  <div class="grip"></div>
  <div class="strip d-flex">
   <button class="tl" aria-label="新建"><svg class="ic"><use href="#new"/></svg></button><button class="tl" aria-label="打开"><svg class="ic"><use href="#open"/></svg></button><button class="tl" aria-label="保存"><svg class="ic"><use href="#save"/></svg></button><i class="sepv"></i>
   <button class="tl" aria-label="打印"><svg class="ic"><use href="#print"/></svg></button><button class="tl" aria-label="打印预览"><svg class="ic"><use href="#preview"/></svg></button><button class="tl" aria-label="发布"><svg class="ic"><use href="#plot"/></svg></button><button class="tl" aria-label="三维打印"><svg class="ic"><use href="#publish"/></svg></button><i class="sepv"></i>
   <button class="tl" aria-label="剪切"><svg class="ic"><use href="#cut"/></svg></button><button class="tl" aria-label="复制"><svg class="ic"><use href="#copyc"/></svg></button><button class="tl" aria-label="粘贴"><svg class="ic"><use href="#paste"/></svg></button><button class="tl" aria-label="特性匹配"><svg class="ic"><use href="#match"/></svg></button><button class="tl" aria-label="块编辑器"><svg class="ic"><use href="#bedit"/></svg></button><i class="sepv"></i>
   <button class="tl" aria-label="放弃"><svg class="ic"><use href="#undo"/></svg></button><button class="crt" aria-label="放弃列表"></button><button class="tl" aria-label="重做"><svg class="ic"><use href="#redo"/></svg></button><button class="crt dim" aria-label="重做列表"></button><i class="sepv"></i>
   <button class="tl" aria-label="平移"><svg class="ic"><use href="#pan"/></svg></button><button class="tl" aria-label="实时缩放"><svg class="ic"><use href="#zoomr"/></svg></button><button class="tl" aria-label="窗口缩放"><svg class="ic"><use href="#zoomw"/></svg></button><button class="tl" aria-label="缩放上一个"><svg class="ic"><use href="#zoomp"/></svg></button><i class="sepv"></i>
   <button class="tl" aria-label="特性"><svg class="ic"><use href="#props"/></svg></button><button class="tl" aria-label="设计中心"><svg class="ic"><use href="#dc"/></svg></button><button class="tl" aria-label="工具选项板"><svg class="ic"><use href="#pal"/></svg></button><button class="tl" aria-label="图纸集"><svg class="ic"><use href="#sheet"/></svg></button><button class="tl" aria-label="标记集"><svg class="ic"><use href="#mark-up"/></svg></button><button class="tl" aria-label="计算器"><svg class="ic"><use href="#calc"/></svg></button><i class="sepv"></i>
   <button class="tl" aria-label="帮助"><svg class="ic"><use href="#help"/></svg></button>
  </div>
  <div class="grip ms-1"></div>
  <div class="strip d-flex"><button class="tl" aria-label="文字样式"><svg class="ic"><use href="#txt"/></svg></button><div class="cmb" style="width:92px"><select class="form-select pl-wide" aria-label="文字样式"><option>Standard</option></select></div></div><div class="grip-s"></div>
  <div class="strip d-flex"><button class="tl" aria-label="标注样式"><svg class="ic"><use href="#dimst"/></svg></button><div class="cmb" style="width:92px"><select class="form-select pl-wide" aria-label="标注样式"><option>ISO-25</option></select></div></div><div class="grip-s"></div>
  <div class="strip d-flex"><button class="tl" aria-label="表格样式"><svg class="ic"><use href="#tabst"/></svg></button><div class="cmb" style="width:92px"><select class="form-select" style="padding-left:3px" aria-label="表格样式"><option>Standard</option></select></div></div><div class="grip-s"></div>
  <div class="strip d-flex"><button class="tl" aria-label="多重引线样式"><svg class="ic"><use href="#mlst"/></svg></button><div class="cmb" style="width:92px"><select class="form-select pl-wide" aria-label="多重引线样式"><option>Standard</option></select></div></div>
 </div>
 <div class="barrow d-flex">
  <div class="grip"></div>
  <div class="strip d-flex"><div class="cmb" style="width:135px"><select class="form-select" aria-label="工作空间"><option>AutoCAD 经典</option></select></div><button class="tl" aria-label="工作空间设置"><svg class="ic"><use href="#gear"/></svg></button><button class="tl" aria-label="我的工作空间"><svg class="ic"><use href="#wssave"/></svg></button></div>
  <div class="grip"></div>
  <div class="strip d-flex"><button class="tl" aria-label="图层特性"><svg class="ic"><use href="#layers"/></svg></button>
   <div class="cmb" style="width:232px"><div class="deco d-flex align-items-center" style="left:2px"><svg class="ic" style="width:13px"><use href="#bulb"/></svg><svg class="ic" style="width:13px"><use href="#sun"/></svg><svg class="ic" style="width:13px"><use href="#vpf"/></svg><svg class="ic" style="width:13px"><use href="#lock"/></svg><svg width="9" height="9"><path d="M.5.5h8v8h-8z" fill="#e80000" stroke="#611"/></svg></div><select class="form-select pl-layer" aria-label="图层"><option>轴线</option></select></div>
   <button class="tl" aria-label="置为当前"><svg class="ic"><use href="#laycur"/></svg></button><button class="tl" aria-label="上一个图层"><svg class="ic"><use href="#layprev"/></svg></button><button class="tl" aria-label="图层状态"><svg class="ic"><use href="#layers"/></svg></button></div>
  <div class="grip ms-1"></div>
  <div class="cmb" style="width:116px"><svg class="deco" width="9" height="16"><path d="M.5 4h8v8h-8z" fill="#e80000" stroke="#611"/></svg><select class="form-select ser pl-swatch" aria-label="颜色"><option>ByLayer</option></select></div><div class="grip-s"></div>
  <div class="cmb" style="width:124px"><svg class="deco" width="48" height="16"><path d="M0 8.500h17M19 8.500h18M39 8.500h8" stroke="#222"/></svg><select class="form-select hot ser pl-line" aria-label="线型"><option>ByLayer</option></select>
   <div class="ltlist d-flex justify-content-between ser"><ul class="list-unstyled mb-0" role="listbox" aria-label="线型">
    <li class="d-flex" role="option"><svg><path d="M0 6.500h17M19 6.500h18M39 6.500h8" stroke="#222"/></svg>ByLayer</li>
    <li class="d-flex" role="option"><svg><path d="M0 6.500h47" stroke="#222"/></svg>ByBlock</li>
    <li class="d-flex mono8" role="option"><svg><path d="M0 6.500h17M19 6.500h18M39 6.500h8" stroke="#222"/></svg>ACAD...4W100</li>
    <li class="d-flex" role="option"><svg><path d="M0 6.500h47" stroke="#222"/></svg>Continuous</li>
    <li class="d-flex" role="option" aria-selected="true"><svg></svg><span class="sel">其他...</span></li></ul>
    <div class="vs d-flex flex-column justify-content-between align-items-center py-1"><svg width="7" height="5"><path d="M0 4h6L3 1z" fill="#888"/></svg><svg width="7" height="5"><path d="M0 1h6L3 4z" fill="#888"/></svg></div></div>
   <div class="hl"></div><div class="tip" role="tooltip">其他...</div>
  </div><div class="grip-s"></div>
  <div class="cmb" style="width:96px"><svg class="deco" width="28" height="16"><path d="M0 8.500h27" stroke="#222"/></svg><select class="form-select ser pl-short" aria-label="线宽"><option>ByLayer</option></select></div><div class="grip-s"></div>
  <div class="cmb" style="width:93px"><select class="form-select mono8" aria-label="打印样式" disabled><option>BYCOLOR</option></select></div>
 </div>
</div>

<main class="work d-flex flex-grow-1">
 <div class="side d-flex flex-column"><div class="vgrip"></div>
  <button class="tl" aria-label="直线"><svg class="ic"><use href="#line"/></svg></button><button class="tl" aria-label="构造线"><svg class="ic"><use href="#xline"/></svg></button><button class="tl" aria-label="多段线"><svg class="ic"><use href="#pline"/></svg></button><button class="tl" aria-label="正多边形"><svg class="ic"><use href="#poly"/></svg></button><button class="tl" aria-label="矩形"><svg class="ic"><use href="#rect"/></svg></button><button class="tl" aria-label="圆弧"><svg class="ic"><use href="#arc"/></svg></button><button class="tl" aria-label="圆"><svg class="ic"><use href="#circ"/></svg></button><button class="tl" aria-label="修订云线"><svg class="ic"><use href="#cloud"/></svg></button><button class="tl" aria-label="样条曲线"><svg class="ic"><use href="#spline"/></svg></button><button class="tl" aria-label="椭圆"><svg class="ic"><use href="#ell"/></svg></button><button class="tl" aria-label="椭圆弧"><svg class="ic"><use href="#ella"/></svg></button><button class="tl" aria-label="插入块"><svg class="ic"><use href="#insb"/></svg></button><button class="tl" aria-label="创建块"><svg class="ic"><use href="#mkb"/></svg></button><button class="tl" aria-label="点"><svg class="ic"><use href="#pt"/></svg></button><button class="tl" aria-label="图案填充"><svg class="ic"><use href="#hatch"/></svg></button><button class="tl" aria-label="渐变色"><svg class="ic"><use href="#grad"/></svg></button><button class="tl" aria-label="面域"><svg class="ic"><use href="#region"/></svg></button><button class="tl" aria-label="表格"><svg class="ic"><use href="#table"/></svg></button><button class="tl" aria-label="多行文字"><svg class="ic"><use href="#mt"/></svg></button><button class="tl" aria-label="添加选定对象"><svg class="ic"><use href="#adds"/></svg></button>
 </div>
 <div class="d-flex flex-column flex-grow-1 mw-100" style="margin:0 5px;min-width:0">
  <div class="d-flex flex-grow-1" style="min-height:0">
   <div class="canvas flex-grow-1">
    <svg class="position-absolute" width="924" height="390" fill="none">
     <path stroke="#b80000" d="M168.500 102v290M229.500 102v290M256.500 102v290M277.500 102v290M319.500 102v290M347.500 102v290M367.500 102v290M410.500 102v290M437.500 102v290M75 155.500h483M75 199.500h483M75 253.500h483M75 301.500h483M75 329.500h483M75 349.500h483"/>
     <path stroke="#ddd" d="M8.500 347v36.500H46M10 333l5 5 5-5M14.500 338v5M51 373l9 10M60 373l-9 10"/>
     <path d="M738 62l13 4-4 3 49 48-53-44-3 3z" fill="#f23a3a" stroke="#f23a3a" stroke-width="1.500"/>
     <circle cx="817" cy="377" r="6" fill="#aaa"/><circle cx="833" cy="377" r="6" fill="#aaa"/>
    </svg>
    <div class="note">弹出下拉列表<br>点击其他选项</div>
   </div>
   <div class="vscroll d-flex flex-column align-items-center"><button class="sb" aria-label="向上"><svg width="6" height="4"><path d="M0 4h6L3 0z" fill="#555"/></svg></button><div class="sb" style="margin-top:18px"></div><button class="sb mt-auto" aria-label="向下"><svg width="6" height="4"><path d="M0 0h6L3 4z" fill="#555"/></svg></button></div>
  </div>
  <div class="tabs d-flex align-items-center">
   <button aria-label="首个"><svg width="7" height="8"><path d="M1 1v6" stroke="#555"/><path d="M6 1v6L2 4z" fill="#555"/></svg></button><button aria-label="上一个"><svg width="6" height="8"><path d="M5 1v6L1 4z" fill="#555"/></svg></button><button aria-label="下一个"><svg width="6" height="8"><path d="M1 1v6l4-3z" fill="#555"/></svg></button><button aria-label="末个"><svg width="7" height="8"><path d="M6 1v6" stroke="#555"/><path d="M1 1v6l4-3z" fill="#555"/></svg></button>
   <svg width="8" height="14"><path d="M0 0h8v14H6z" fill="#000"/></svg><a class="on" href="#">模型</a><svg width="9" height="14"><path d="M0 0h8L2 14H0z" fill="#000"/></svg><a href="#">布局1</a><svg width="10" height="14"><path d="M3 13L8 1" stroke="#333"/></svg><a href="#">布局2</a><svg width="11" height="14"><path d="M3 13L8 1" stroke="#333"/></svg>
   <div class="d-flex justify-content-between align-items-center ms-auto" style="width:330px;padding:0 18px 0 8px;border-left:2px solid #bbb"><svg width="5" height="8"><path d="M4 1v6L1 4z" fill="#333"/></svg><svg width="5" height="8"><path d="M1 1v6l3-3z" fill="#333"/></svg></div>
  </div>
 </div>
 <div class="side d-flex flex-column" style="margin-right:3px"><div class="vgrip"></div>
  <button class="tl" aria-label="删除"><svg class="ic"><use href="#erase"/></svg></button><button class="tl" aria-label="复制对象"><svg class="ic"><use href="#copyo"/></svg></button><button class="tl" aria-label="镜像"><svg class="ic"><use href="#mirror"/></svg></button><button class="tl" aria-label="偏移"><svg class="ic"><use href="#offset"/></svg></button><button class="tl" aria-label="阵列"><svg class="ic"><use href="#array"/></svg></button><button class="tl" aria-label="移动"><svg class="ic"><use href="#move"/></svg></button><button class="tl" aria-label="旋转"><svg class="ic"><use href="#rot"/></svg></button><button class="tl" aria-label="缩放"><svg class="ic"><use href="#scale"/></svg></button><button class="tl" aria-label="拉伸"><svg class="ic"><use href="#stretch"/></svg></button><button class="tl" aria-label="修剪"><svg class="ic"><use href="#trim"/></svg></button><button class="tl" aria-label="延伸"><svg class="ic"><use href="#extend"/></svg></button><button class="tl" aria-label="打断于点"><svg class="ic"><use href="#bpt"/></svg></button><button class="tl" aria-label="打断"><svg class="ic"><use href="#brk"/></svg></button><button class="tl" aria-label="合并"><svg class="ic"><use href="#join"/></svg></button><button class="tl" aria-label="倒角"><svg class="ic"><use href="#chamf"/></svg></button><button class="tl" aria-label="圆角"><svg class="ic"><use href="#fillet"/></svg></button><button class="tl" aria-label="光顺曲线"><svg class="ic"><use href="#blend"/></svg></button><button class="tl" aria-label="分解"><svg class="ic"><use href="#expl"/></svg></button>
  <div class="vgrip" style="height:8px"></div>
  <button class="tl" aria-label="前置"><svg class="ic"><use href="#ord1"/></svg></button><button class="tl" aria-label="后置"><svg class="ic"><use href="#ord2"/></svg></button><button class="tl" aria-label="置于对象之上"><svg class="ic"><use href="#ord3"/></svg></button><button class="tl" aria-label="置于对象之下"><svg class="ic"><use href="#ord4"/></svg></button><button class="tl border-top border-secondary" aria-label="文字前置" style="font-size:7px;line-height:8px">ABC</button>
 </div>
</main>

<section class="cmd d-flex" aria-label="命令窗口"><div class="handle"></div>
 <div class="flex-grow-1 d-flex flex-column justify-content-between" style="margin-right:1px">
  <div class="hist"><div><span class="zh">自动保存到</span> C:\Users\Administrator\appdata\local\temp\Drawing2_1_1_0800.sv$ ...</div><div><span class="zh">命令</span>:</div></div>
  <div class="cmdline d-flex"><label for="cmdin" class="flex-shrink-0"><span class="zh">命令</span>:</label><input id="cmdin" type="text"></div>
 </div></section>

<footer class="status d-flex align-items-center">
 <div class="coord" style="margin-left:9px">47717.3209, 37255.0763, 0.0000</div>
 <button class="tl" aria-label="推断约束"><svg class="ic"><use href="#s1"/></svg></button><button class="tl" aria-label="捕捉"><svg class="ic"><use href="#s2"/></svg></button><button class="tl" aria-label="栅格"><svg class="ic"><use href="#s3"/></svg></button><button class="tl lit" aria-label="正交"><svg class="ic"><use href="#s4"/></svg></button><button class="tl" aria-label="极轴"><svg class="ic"><use href="#s5"/></svg></button><button class="tl lit" aria-label="对象捕捉"><svg class="ic"><use href="#s6"/></svg></button><button class="tl" aria-label="三维对象捕捉"><svg class="ic"><use href="#s7"/></svg></button><button class="tl lit" aria-label="对象追踪"><svg class="ic"><use href="#s8"/></svg></button><button class="tl" aria-label="动态UCS"><svg class="ic"><use href="#s9"/></svg></button><button class="tl" aria-label="动态输入"><svg class="ic"><use href="#s10"/></svg></button><button class="tl" aria-label="线宽"><svg class="ic"><use href="#s11"/></svg></button><button class="tl lit" aria-label="透明度"><svg class="ic"><use href="#s12"/></svg></button><button class="tl" aria-label="快捷特性"><svg class="ic"><use href="#s13"/></svg></button><button class="tl" aria-label="选择循环"><svg class="ic"><use href="#s14"/></svg></button>
 <div class="d-flex align-items-center ms-auto">
  <button class="tl fw-bold" style="width:23px;font-size:9px" aria-label="模型空间">模型</button><button class="tl" aria-label="快速查看布局"><svg class="ic"><use href="#sl"/></svg></button><button class="tl" aria-label="快速查看图形"><svg class="ic"><use href="#sm"/></svg></button>
  <button class="tl" style="width:50px" aria-label="注释比例"><svg class="ic"><use href="#scl"/></svg>1:1<svg width="8" height="6"><path d="M1 1h6L4 5z" fill="#222"/></svg></button><button class="tl" aria-label="注释可见性"><svg class="ic"><use href="#scl"/></svg></button><button class="tl" aria-label="自动添加比例"><svg class="ic"><use href="#scl"/></svg></button>
  <button class="tl ms-1" aria-label="切换工作空间"><svg class="ic"><use href="#gear"/></svg></button><button class="tl" aria-label="锁定"><svg class="ic"><use href="#calc"/></svg></button><button class="tl" aria-label="硬件加速"><svg class="ic"><use href="#open"/></svg></button><button class="tl ms-2" style="width:32px" aria-label="隔离对象"><svg class="ic"><use href="#bulb"/></svg></button><button class="crt" aria-label="状态栏菜单"></button><button class="tl" aria-label="全屏显示"><svg class="ic"><use href="#clean"/></svg></button>
  <svg width="14" height="14" fill="#ddd"><path d="M11 3h2v2h-2zM11 7h2v2h-2zM7 7h2v2H7zM11 11h2v2h-2zM7 11h2v2H7zM3 11h2v2H3z"/></svg>
 </div>
</footer>

<aside class="brand d-flex align-items-center"><svg width="35" height="38" viewBox="0 0 35 38" fill="none" stroke="#d4d8e3" stroke-width="3"><path d="M8 30V8c0-4 3-5 6-4l15 9c5 3 5 8 0 11L14 33c-2 1-4 1-5 0"/><path d="M2.500 8v20c0 5 3 8 7 6" stroke-width="2.500"/><path d="M14 14l8 5-8 5z" fill="#d4d8e3" stroke="none"/><path d="M23.500 15v8" stroke-width="1.500"/></svg><div style="margin-left:12px"><div class="bn">溜溜自学</div><div class="bu">zixue.3D66.COM</div></div></aside>
</div>
<script src="https://cdn.jsdelivr.net/npm/bootstrap@5.3.0/dist/js/bootstrap.bundle.min.js"></script>
</body>
</html>
